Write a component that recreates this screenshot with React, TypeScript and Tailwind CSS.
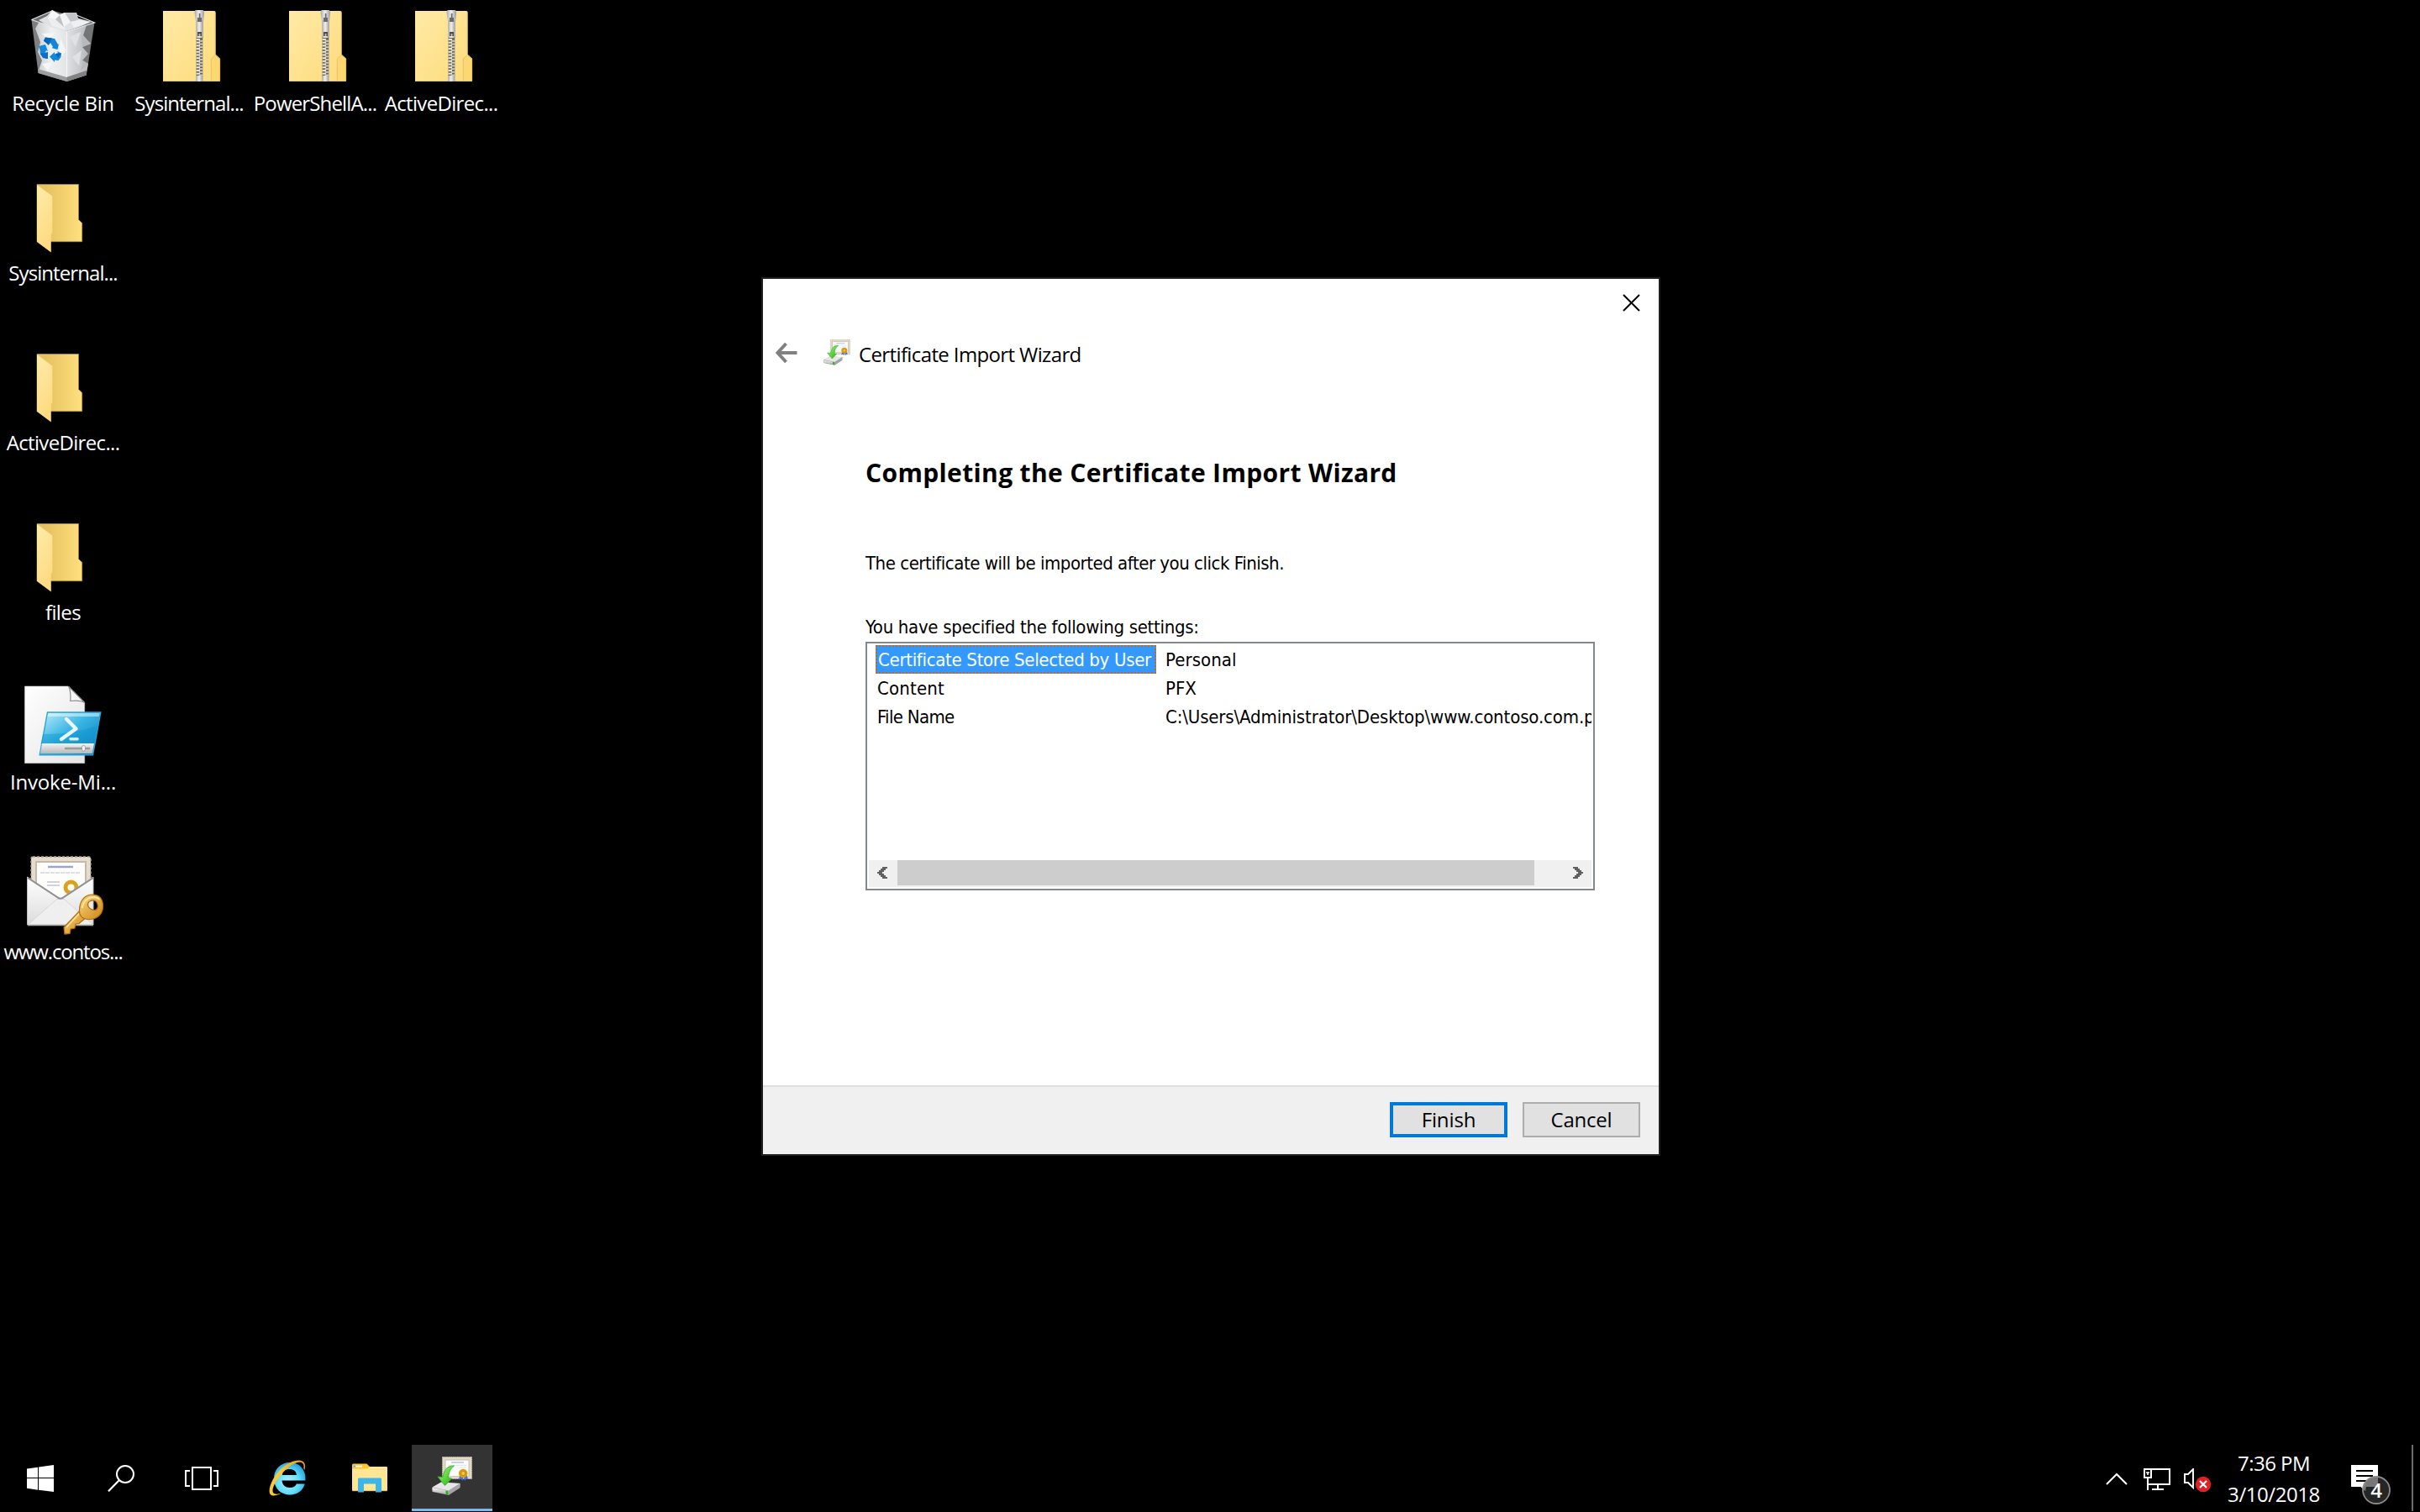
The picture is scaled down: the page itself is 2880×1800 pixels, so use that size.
import React from "react";

function RecycleBinIcon() {
  return (
    <svg width="150" height="107" viewBox="0 0 150 107">
      <defs>
        <linearGradient id="binLeft" x1="0" y1="0" x2="1" y2="0">
          <stop offset="0" stopColor="#c9cbcd" />
          <stop offset="0.5" stopColor="#eef0f1" />
          <stop offset="1" stopColor="#e2e4e6" />
        </linearGradient>
        <linearGradient id="binRight" x1="0" y1="0" x2="1" y2="0">
          <stop offset="0" stopColor="#dfe1e4" />
          <stop offset="1" stopColor="#b2b4b7" />
        </linearGradient>
      </defs>
      <path d="M37.5 23.5 L63 12.5 L112.5 27 L79.5 37.5 Z" fill="#6d6f71" />
      <path d="M37.5 23.5 L79.5 37.5 V97 L45.5 87 Z" fill="#7d7f81" />
      <path d="M112.5 27 L79.5 37.5 V97 L102.8 89.5 Z" fill="#737577" />
      <path d="M42 34 L46 27 L56 28 L79.5 37.5 V93 L46 84 L50 72 L45 62 L48 50 Z" fill="url(#binLeft)" />
      <path d="M79.5 37.5 L103 30 L99 42 L108 52 L98 56 L105 64 L98 72 L105 76 L103 86 L79.5 93 Z" fill="url(#binRight)" />
      <path d="M46 24 L56 19 L62 12 L71 17 L77 15 L91 15 L93 22 L108 26 L97 31 L79.5 37 L60 32 Z" fill="#dfe1e3" />
      <path d="M62 12 L71 18 L66 23 L57 22 Z" fill="#f6f7f7" />
      <path d="M71 18 L77 15 L84 26 L76 32 Z" fill="#f3f4f5" />
      <path d="M77 15 L91 15 L93 24 L84 26 Z" fill="#c4c7c9" />
      <path d="M57 22 L66 23 L76 32 L79 36 L62 31 Z" fill="#eceeef" />
      <path d="M66 23 L71 18 L76 32 Z" fill="#bfc2c4" />
      <path d="M93 24 L108 26 L88 33 L84 26 Z" fill="#eff0f1" />
      <path d="M50 40 L66 39 L58 48 Z M72 45 L78 60 L70 74 Z M50 76 L62 74 L57 85 Z" fill="#f5f6f6" />
      <path d="M83 44 L96 38 L90 56 Z M86 68 L97 60 L94 78 Z" fill="#dfe1e3" />
      <path d="M97 42 L108 52 L98 56 Z M99 72 L105 76 L96 84 Z" fill="#b7babd" />
      <path d="M79.5 37.5 V92" stroke="#f5f5f6" strokeWidth="1.2" />
      <path d="M45 82 L79.5 92 L103 84 L102.8 89.5 L79.5 97 L45.5 87 Z" fill="#9b9d9f" />
      <path d="M79.5 92 L103 84 L102.8 89.5 L79.5 97 Z" fill="#808284" />
      <path d="M37.5 23.5 L63 12.5 M91 18 L112.5 27 L79.5 37.5 L37.5 23.5" fill="none" stroke="#e4e5e6" strokeWidth="1.2" />
      <path d="M52 48 L54 44.5 L65 46 L69 53 L70 52 L68.5 59 L61.5 57 L63 56 L60 51 L57.5 54 Z" fill="#0f86dc" />
      <path d="M54 44.5 L62 45.5 L58 53 L52 49 Z" fill="#0864bb" />
      <path d="M46 55 L54 53 L57 61 L55 60 L53 64 L57 70 L55 70 L48 65 L47.5 59 Z" fill="#1389dc" />
      <path d="M48 64 L57 62 L57 70 L51 69 Z" fill="#0c6fc6" />
      <path d="M59 67.5 L65 62 V64.5 L69 63 L68 61 L73 63.5 L72.5 68 L69.5 72 L65 71.5 V74 Z" fill="#1088dd" />
      <path d="M66 64 L73 63.5 L69 69 Z" fill="#0864bb" />
    </svg>
  );
}

function ZipFolderIcon() {
  const teeth = Array.from({ length: 12 }, (_, i) => 46 + i * 3.7);
  return (
    <svg width="150" height="107" viewBox="0 0 150 107">
      <defs>
        <linearGradient id="zipBody" x1="0" y1="0" x2="1" y2="1">
          <stop offset="0" stopColor="#ffeaa6" />
          <stop offset="1" stopColor="#fedb7a" />
        </linearGradient>
        <linearGradient id="zipMetal" x1="0" y1="0" x2="1" y2="0">
          <stop offset="0" stopColor="#a9a9a9" />
          <stop offset="0.45" stopColor="#f1f1f1" />
          <stop offset="1" stopColor="#9a9a9a" />
        </linearGradient>
      </defs>
      <path d="M44 13 H105 Q106.500 13 106.500 14.500 V65 L112 70 V95.500 Q112 97 110.500 97 H44 Z" fill="url(#zipBody)" />
      <path d="M101 97 V70 L106.500 65 L112 70 V95.500 Q112 97 110.500 97 Z" fill="#fdd870" />
      <path d="M101.300 97 V70 L106.500 65.400" fill="none" stroke="#e9c466" strokeWidth="1" />
      <path d="M44 96.500 H111" stroke="#e8c35f" strokeWidth="1" />
      <path d="M106.300 14.500 V65 L111.700 70 V96" fill="none" stroke="#d6b45c" strokeWidth="0.800" />
      <rect x="83.500" y="44" width="7.800" height="47" fill="#6f684f" />
      {teeth.map((y, i) => (
        <g key={i}>
          <rect x="83.500" y={y} width="4.500" height="1.900" fill="#e9e9e9" />
          <rect x="86.800" y={y + 1.850} width="4.500" height="1.900" fill="#c9c9c9" />
        </g>
      ))}
      <path d="M82.500 12 H92 L93.200 15 L92 25 H83 L81.500 15 Z" fill="url(#zipMetal)" />
      <rect x="83.200" y="24" width="8.600" height="21" fill="url(#zipMetal)" />
      <rect x="85" y="21" width="5" height="5" fill="#6a6a6a" />
      <rect x="86.800" y="16" width="1.700" height="6" fill="#6a6a6a" />
      <rect x="85" y="38" width="5" height="5" fill="#4b4b48" />
      <rect x="86.500" y="40" width="2" height="3" fill="#b5b5b5" />
      <rect x="83.200" y="90" width="8.200" height="7" fill="url(#zipMetal)" />
    </svg>
  );
}

function FolderIcon() {
  return (
    <svg width="150" height="107" viewBox="0 0 150 107">
      <defs>
        <linearGradient id="fldBack" x1="0" y1="0" x2="1" y2="0">
          <stop offset="0.200" stopColor="#e6c15f" />
          <stop offset="1" stopColor="#ffe07f" />
        </linearGradient>
        <linearGradient id="fldFlap" x1="0" y1="0" x2="0.300" y2="1">
          <stop offset="0" stopColor="#ffeba8" />
          <stop offset="1" stopColor="#fedb82" />
        </linearGradient>
      </defs>
      <path d="M44 17.500 H93.500 V59.500 L97.700 63.500 V85.700 H44 Z" fill="url(#fldBack)" stroke="#a38b4c" strokeWidth="0.700" />
      <path d="M44 18 L62.300 31.500 V75 L60.800 77 V98.500 L44 86 Z" fill="url(#fldFlap)" />
    </svg>
  );
}

function PowerShellIcon() {
  return (
    <svg width="150" height="107" viewBox="0 0 150 107">
      <defs>
        <linearGradient id="psDoc" x1="0" y1="0" x2="1" y2="1">
          <stop offset="0" stopColor="#ffffff" />
          <stop offset="1" stopColor="#e4e4e4" />
        </linearGradient>
        <linearGradient id="psBlue" x1="0" y1="0" x2="1" y2="1">
          <stop offset="0" stopColor="#c5effb" />
          <stop offset="0.450" stopColor="#38b5e4" />
          <stop offset="1" stopColor="#0a72b0" />
        </linearGradient>
        <linearGradient id="psGrey" x1="0" y1="0" x2="0" y2="1">
          <stop offset="0" stopColor="#f2f2f2" />
          <stop offset="1" stopColor="#b5b8ba" />
        </linearGradient>
      </defs>
      <path d="M29.500 9 H81 L100.700 28.500 V100.500 H29.500 Z" fill="url(#psDoc)" stroke="#cfcfcf" strokeWidth="0.600" />
      <path d="M81.500 9 Q84.500 14 83.800 26.500 Q95 25 100.700 28.500 Z" fill="#f7f7f7" stroke="#8d8d8d" strokeWidth="1.200" />
      <path d="M56.500 40 H119.800 L110.500 90.800 H47.200 Z" fill="url(#psBlue)" stroke="#2ba6d8" strokeWidth="1.400" />
      <path d="M51 66 Q88 66 116.500 56 L112.500 78 H48.500 Z" fill="#0a97d2" opacity="0.450" />
      <path d="M57.300 41 H118.600 L117.800 45 H56.500 Z" fill="#ffffff" opacity="0.450" />
      <path d="M50 77 H112 L109.800 89 H48 Z" fill="url(#psGrey)" />
      <path d="M78 83 H106" stroke="#9b9b9b" strokeWidth="2.400" strokeLinecap="round" />
      <rect x="97.500" y="79.500" width="4" height="6.500" rx="2" fill="#f4f4f4" stroke="#8c8c8c" strokeWidth="0.700" />
      <path d="M79 48 L90.500 59.500 L73 72" fill="none" stroke="#eafafe" strokeWidth="4.400" strokeLinecap="round" strokeLinejoin="round" />
      <path d="M84 71.800 H92" stroke="#d5f2fb" strokeWidth="3.600" strokeLinecap="round" />
    </svg>
  );
}

function PfxIcon() {
  return (
    <svg width="150" height="107" viewBox="0 0 150 107">
      <defs>
        <linearGradient id="envFront" x1="0" y1="0" x2="0" y2="1">
          <stop offset="0" stopColor="#ffffff" />
          <stop offset="1" stopColor="#dcdcdc" />
        </linearGradient>
        <linearGradient id="keyGold" x1="0" y1="0" x2="1" y2="1">
          <stop offset="0" stopColor="#ffd87a" />
          <stop offset="1" stopColor="#c98317" />
        </linearGradient>
      </defs>
      <rect x="37" y="10" width="71" height="58" rx="2" fill="#e3dccf" stroke="#b3a692" strokeWidth="1.400" strokeDasharray="3 2" />
      <rect x="42" y="15" width="61" height="50" fill="#c7b9a8" />
      <rect x="44" y="17" width="57" height="50" fill="#fdfdfb" />
      <path d="M57 22 H87" stroke="#9aa4d2" strokeWidth="2.400" />
      <path d="M48 29 H96" stroke="#dcdfe6" strokeWidth="1.800" strokeDasharray="5 1" />
      <path d="M56 40 H71 M56 44 H71" stroke="#d0d3da" strokeWidth="2" />
      <circle cx="84.500" cy="46.500" r="6.500" fill="none" stroke="#d9a21b" strokeWidth="5" />
      <path d="M32.500 34 L72 60 L111 34 V91 H32.500 Z" fill="url(#envFront)" stroke="#bdbdbd" strokeWidth="1" />
      <path d="M33 91 L67 61 Q72 58 77 61 L111 91 Z" fill="#efefef" stroke="#d2d2d2" strokeWidth="0.800" />
      <path d="M33 35 L68 58 Q72 61.500 76 58 L111 35" fill="none" stroke="#8f8f8f" strokeWidth="2" />
      <path d="M33 91.500 H111" stroke="#a2a2a2" strokeWidth="1.600" />
      <path d="M98 71 L76 94 L77 102 L83 101.500 L84 96 L89 95 L90 90 L94 89.500 L104 81 Z" fill="url(#keyGold)" stroke="#b36c12" strokeWidth="1.200" />
      <path d="M97.500 74 L79 94" stroke="#ffe7a2" strokeWidth="1.600" />
      <path fillRule="evenodd" d="M110 55 C119 55 122.500 61 122.500 69 C122.500 78 116 84.500 106 84.500 C98 84.500 94 80 94.500 73 C95 62 101 55 110 55 Z M112 62 C107 61 103 65 105 69 C107 73 113 75 115.500 72 C117.500 69 116 63 112 62 Z" fill="url(#keyGold)" stroke="#b36c12" strokeWidth="1.200" />
      <path d="M97.500 71 Q100 59.500 110 58 Q116 58 118.500 61" fill="none" stroke="#ffe9a8" strokeWidth="1.800" />
    </svg>
  );
}

function CertImportIcon({ size }: { size: number }) {
  return (
    <svg width={size} height={size} viewBox="0 0 48 48" className="shrink-0">
      <defs>
        <linearGradient id="arrowGreen" x1="0" y1="0" x2="1" y2="1">
          <stop offset="0" stopColor="#b6f5a0" />
          <stop offset="0.500" stopColor="#5dd941" />
          <stop offset="1" stopColor="#2ea51c" />
        </linearGradient>
        <linearGradient id="drive" x1="0" y1="0" x2="0" y2="1">
          <stop offset="0" stopColor="#f6f6f6" />
          <stop offset="1" stopColor="#a9a9ab" />
        </linearGradient>
      </defs>
      <rect x="12.500" y="0.500" width="35" height="26" fill="#e2d9ca" stroke="#c2b6a3" strokeWidth="1" strokeDasharray="1.500 1" />
      <rect x="15.500" y="3.500" width="29" height="20" fill="#c9bba9" />
      <rect x="16.500" y="4.500" width="27" height="18.500" fill="#fdfdfd" />
      <path d="M23 7 H38" stroke="#a9b3e0" strokeWidth="1.200" />
      <path d="M19 10.300 H41 M32 13 H41" stroke="#dfe2ea" strokeWidth="1" />
      <path d="M33 23 L32 27.500 L34.800 26.800 L36.500 29 L37.500 24 Z M38 24 L39 29 L40.800 26.800 L43 27 L41.500 22 Z" fill="#3b6fe0" />
      <circle cx="37.200" cy="20" r="5.300" fill="#dd9d13" />
      <circle cx="37.200" cy="20" r="2.600" fill="#f3c44a" stroke="#b97f0c" strokeWidth="0.800" />
      <path d="M0 37 L11 30.500 L34 32 L33 37.500 L20 46 L0.500 42 Z" fill="#8e8f91" />
      <path d="M0.500 36.500 L11 30.500 L33.500 32 L20 40.500 Z" fill="#e6e6e8" />
      <path d="M0.500 37 L20 40.800 V45.300 L0.800 41.500 Z" fill="url(#drive)" />
      <path d="M20 40.800 L33.500 32.300 V37 L20 45.300 Z" fill="#a4a5a7" />
      <path d="M16.500 40.300 L19.500 41 V45.200 L16.500 44.600 Z" fill="#2bb51a" />
      <path d="M26.500 11 C18 11 14.500 15.500 13 24.500 L7 24 L15.500 34.500 L23.500 26 L19.500 25.500 C20 19 21.500 15 26.500 11 Z" fill="url(#arrowGreen)" stroke="#3fae2a" strokeWidth="0.900" />
    </svg>
  );
}

function DesktopItem({ icon, label, tracking }: { icon: React.ReactNode; label: string; tracking: string }) {
  return (
    <div className="flex h-[202px] w-[150px] flex-col items-center whitespace-nowrap">
      {icon}
      <span className={`text-[24px] leading-[32px] text-white ${tracking}`}>{label}</span>
    </div>
  );
}

function Desktop() {
  return (
    <div className="flex items-start">
      <div className="flex flex-col">
        <DesktopItem icon={<RecycleBinIcon />} label="Recycle Bin" tracking="tracking-[-0.36px]" />
        <DesktopItem icon={<FolderIcon />} label="Sysinternal..." tracking="tracking-[-0.92px]" />
        <DesktopItem icon={<FolderIcon />} label="ActiveDirec..." tracking="tracking-[-0.66px]" />
        <DesktopItem icon={<FolderIcon />} label="files" tracking="tracking-[-0.6px]" />
        <DesktopItem icon={<PowerShellIcon />} label="Invoke-Mi..." tracking="tracking-[-0.17px]" />
        <DesktopItem icon={<PfxIcon />} label="www.contos..." tracking="tracking-[-1.15px]" />
      </div>
      <DesktopItem icon={<ZipFolderIcon />} label="Sysinternal..." tracking="tracking-[-0.92px]" />
      <DesktopItem icon={<ZipFolderIcon />} label="PowerShellA..." tracking="tracking-[-0.85px]" />
      <DesktopItem icon={<ZipFolderIcon />} label="ActiveDirec..." tracking="tracking-[-0.66px]" />
    </div>
  );
}

function SettingsList() {
  return (
    <div className="flex h-[296px] w-[868px] flex-col overflow-hidden border-2 border-[#828790] bg-white p-[2px] font-['DejaVu_Sans_Condensed','DejaVu_Sans',sans-serif] text-[22px] whitespace-nowrap text-black">
      <div className="grid grid-cols-[334px_1fr] gap-x-[11px] overflow-hidden pl-2 leading-[36px]">
        <div className="h-[34px] border-2 border-dotted border-[#cc6600] bg-[#3399ff] pl-px leading-[32px] tracking-[-0.31px] text-white">
          Certificate Store Selected by User
        </div>
        <div className="h-[34px] tracking-[0.06px]">Personal</div>
        <div className="h-[34px] pl-[2px] tracking-[0.17px]">Content</div>
        <div className="h-[34px]">PFX</div>
        <div className="h-[34px] pl-[2px] tracking-[-0.68px]">File Name</div>
        <div className="h-[34px] w-[507px] overflow-hidden tracking-[-0.13px]">{"C:\\Users\\Administrator\\Desktop\\www.contoso.com.pfx"}</div>
      </div>
      <div className="mt-auto flex h-8 items-start bg-[#f0f0f0]">
        <div className="flex h-[30px] w-[34px] pt-2 pl-[10px]">
          <svg width="12" height="14" viewBox="0 0 12 14" shapeRendering="crispEdges">
            <path d="M6 0 H12 V2 H10 V4 H8 V6 H6 V8 H8 V10 H10 V12 H12 V14 H6 V12 H4 V10 H2 V8 H0 V6 H2 V4 H4 V2 H6 Z" fill="#606060" />
          </svg>
        </div>
        <div className="h-[30px] w-[758px] bg-[#cdcdcd]" />
        <div className="ml-auto flex h-[30px] w-[34px] pt-2 pl-3">
          <svg width="12" height="14" viewBox="0 0 12 14" shapeRendering="crispEdges">
            <path d="M6 0 H0 V2 H2 V4 H4 V6 H6 V8 H4 V10 H2 V12 H0 V14 H6 V12 H8 V10 H10 V8 H12 V6 H10 V4 H8 V2 H6 Z" fill="#606060" />
          </svg>
        </div>
      </div>
    </div>
  );
}

function WizardDialog() {
  return (
    <div className="absolute top-[330px] left-[906px] flex h-[1046px] w-[1070px] flex-col border-2 border-[#1f1f1f] bg-white text-black">
      <div className="flex h-[56px] items-center justify-end pr-[22px]">
        <svg width="21" height="21" viewBox="0 0 21 21">
          <path d="M1 1 L20 20 M20 1 L1 20" stroke="#000" strokeWidth="2" />
        </svg>
      </div>
      <div className="flex h-[64px] items-center pl-[15px]">
        <svg width="26" height="26" viewBox="0 0 26 26">
          <path d="M25.500 13 H3 M12.500 2 L2.500 13 L12.500 24" fill="none" stroke="#808080" strokeWidth="4" />
        </svg>
        <div className="ml-[31px]">
          <CertImportIcon size={32} />
        </div>
        <span className="mt-[4px] ml-[10px] text-[24px] leading-[32px] tracking-[-0.62px]">Certificate Import Wizard</span>
      </div>
      <div className="flex flex-1 flex-col pl-[122px]">
        <h1 className="mt-[90px] text-[30px] leading-[42px] font-bold tracking-[0.36px]">Completing the Certificate Import Wizard</h1>
        <p className="mt-[70px] font-['DejaVu_Sans_Condensed','DejaVu_Sans',sans-serif] text-[22px] leading-[34px] tracking-[-0.47px]">
          The certificate will be imported after you click Finish.
        </p>
        <p className="mt-[42px] font-['DejaVu_Sans_Condensed','DejaVu_Sans',sans-serif] text-[22px] leading-[34px] tracking-[-0.31px]">
          You have specified the following settings:
        </p>
        <SettingsList />
      </div>
      <div className="flex h-[82px] items-start justify-end gap-[18px] border-t-2 border-[#dfdfdf] bg-[#f0f0f0] pt-[18px] pr-[22px] text-[24px]">
        <button className="h-[42px] w-[140px] border-4 border-[#0078d7] bg-[#e1e1e1] leading-[34px] tracking-[-0.13px]">Finish</button>
        <button className="h-[42px] w-[140px] border-2 border-[#adadad] bg-[#e1e1e1] leading-[38px] tracking-[-0.23px]">Cancel</button>
      </div>
    </div>
  );
}

function Taskbar() {
  return (
    <div className="mt-auto flex h-20 text-white">
      <div className="flex h-20 w-24 items-center justify-center">
        <svg width="32" height="32" viewBox="0 0 32 32" fill="#fff">
          <path d="M0 4.500 L13 2.700 V15 H0 Z M14 2.500 L32 0 V15 H14 Z M0 16 H13 V29.700 L0 27.800 Z M14 16 H32 V32 L14 29.800 Z" />
        </svg>
      </div>
      <div className="flex h-20 w-24 items-center justify-center">
        <svg width="32" height="32" viewBox="0 0 32 32" fill="none" stroke="#fff">
          <circle cx="21" cy="11" r="10" strokeWidth="2" />
          <path d="M13.500 18.500 L1 31.300" strokeWidth="2.200" />
        </svg>
      </div>
      <div className="flex h-20 w-24 items-center justify-center">
        <svg width="40" height="28" viewBox="0 0 40 28" fill="none" stroke="#fff" strokeWidth="2">
          <path d="M9 1 H31 V27 H9 Z M6 5 H1 V23 H6 M34 5 H39 V23 H34" />
        </svg>
      </div>
      <div className="flex h-20 w-[106px] items-center justify-end">
        <svg width="74" height="44" viewBox="0 0 74 44">
          <defs>
            <radialGradient id="ieBlue" cx="0.450" cy="0.600" r="0.600">
              <stop offset="0" stopColor="#b5f3ff" />
              <stop offset="0.600" stopColor="#5fdcfb" />
              <stop offset="1" stopColor="#25a5e0" />
            </radialGradient>
            <linearGradient id="ieRing" x1="0" y1="1" x2="1" y2="0">
              <stop offset="0" stopColor="#f7c73f" />
              <stop offset="0.500" stopColor="#fbc93a" />
              <stop offset="1" stopColor="#e79c10" />
            </linearGradient>
          </defs>
          <path
            fillRule="evenodd"
            d="M25 3 C36 3 43.500 11 43.500 22 L43.300 24.500 H15.500 C16 29.500 19.500 33 25 33 C29 33 31.500 31.500 33 28.500 H42.800 C40.500 36.500 34 41.500 25 41.500 C14 41.500 6 33.500 6 22.500 C6 11 14 3 25 3 Z M15.800 18 H33 C32.500 13.500 29.500 11 24.500 11 C19.500 11 16.500 13.500 15.800 18 Z"
            fill="url(#ieBlue)"
          />
          <path
            fillRule="evenodd"
            d="M42.300 12 C44.500 5 42 0.500 35 0.500 C26 0.500 13 9 5.500 22 C0 32 -1 40 3 42 C6 43.300 10.500 42 15 39.500 C10.500 41 7 41 5.500 39.500 C3 37 5.500 30 10 23.500 C18 11.500 28 3.500 35.500 2.700 C40.500 2.200 42.300 5.500 41.300 10 Z"
            fill="url(#ieRing)"
          />
        </svg>
      </div>
      <div className="flex h-20 w-24 items-center pl-[25px]">
        <svg width="42" height="36" viewBox="0 0 42 36">
          <path d="M0 2 Q0 0.500 1.500 0.500 H17.500 L21 4 H40.500 Q42 4 42 5.500 V10 H0 Z" fill="#fbc62f" />
          <path d="M0 6.500 H18 L21 4 H40.500 Q42 4 42 5.500 V31.500 Q42 33 40.500 33 H1.500 Q0 33 0 31.500 Z" fill="#fee693" />
          <rect x="2" y="2.700" width="10" height="1.900" fill="#fff" />
          <rect x="2" y="2.700" width="2.200" height="1.900" fill="#3cb4ea" />
          <path d="M0 32.700 H42" stroke="#e7bd55" strokeWidth="0.900" />
          <path d="M7 19 Q7 17.500 8.500 17.500 H33.500 Q35 17.500 35 19 V34.500 H28 V24.500 H14 V34.500 H7 Z" fill="#3db5e8" />
        </svg>
      </div>
      <div className="flex h-[79px] w-24 items-center justify-center border-b-[3px] border-[#76b9ed] bg-[#333333]">
        <CertImportIcon size={48} />
      </div>

      <div className="ml-auto flex h-20 items-start">
        <svg className="mt-[33px]" width="26" height="15" viewBox="0 0 26 15" fill="none" stroke="#fff" strokeWidth="2">
          <path d="M1 14 L13 2 L25 14" />
        </svg>
        <svg className="mt-[28px] ml-[19px]" width="32" height="26" viewBox="0 0 32 26" fill="none" stroke="#fff" strokeWidth="2">
          <path d="M9 1 H31 V19 H5 M1 1 H9 V11 H1 Z M5 11 V26 M17 19 V24 M10 25 H24" />
          <path d="M3 5 H7 M5 5 V8" strokeWidth="1.600" />
        </svg>
        <svg className="mt-[28px] ml-4" width="33" height="30" viewBox="0 0 33 30">
          <path d="M1 7 H5 L11 1 V23 L5 17 H1 Z" fill="none" stroke="#fff" strokeWidth="1.900" />
          <circle cx="23" cy="19" r="9.200" fill="#de2027" />
          <path d="M19 15 L27 23 M27 15 L19 23" stroke="#fff" strokeWidth="2.200" />
        </svg>
        <div className="mt-[3px] mr-px ml-[9px] flex w-[130px] flex-col items-center text-[24px] leading-[37px] whitespace-nowrap">
          <span className="tracking-[-0.52px]">7:36 PM</span>
          <span className="tracking-[-0.43px]">3/10/2018</span>
        </div>
        <div className="relative mt-[24px] ml-[26px] h-[50px] w-[72px]">
          <svg width="50" height="48" viewBox="0 0 50 48">
            <path d="M0 0 H32 V26 H18 V32.500 L11.500 26 H0 Z" fill="#fff" />
            <path d="M6 7 H26 M6 13 H26 M6 19 H26" stroke="#000" strokeWidth="1.900" />
            <circle cx="30" cy="30" r="16" fill="#262626" />
            <path d="M14.500 26 A16 16 0 0 1 32 14.200 V26 H18 L17 31 L14 29 Z" fill="#777777" />
            <circle cx="30" cy="30" r="16" fill="none" stroke="#8a8a8a" strokeWidth="1.800" />
          </svg>
          <span className="absolute top-[14px] left-[23px] w-[14px] text-center text-[24px] leading-[32px] font-semibold">4</span>
        </div>
        <div className="mr-2 h-[79px] w-[2px] bg-[#6b6b6b]" />
      </div>
    </div>
  );
}

export default function App() {
  return (
    <div className="relative flex h-[1800px] w-[2880px] flex-col overflow-hidden bg-black font-['Open_Sans','Noto_Sans',sans-serif]">
      <Desktop />
      <WizardDialog />
      <Taskbar />
    </div>
  );
}
